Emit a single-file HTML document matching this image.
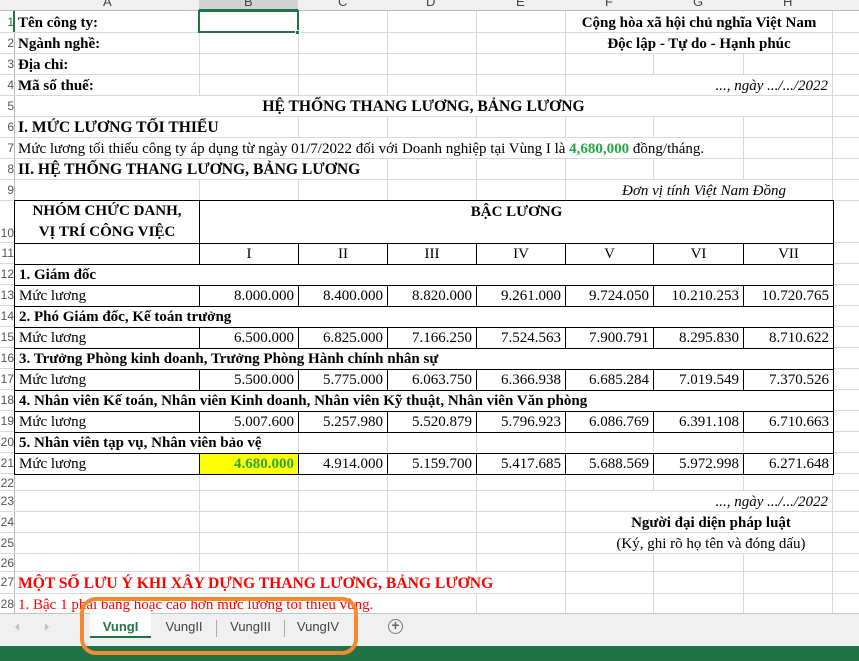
<!DOCTYPE html>
<html><head><meta charset="utf-8"><style>
*{margin:0;padding:0;box-sizing:border-box}
body{width:859px;height:661px;overflow:hidden;background:#fff;position:relative;font-family:"Liberation Serif",serif;font-size:15px;color:#000}
.a{position:absolute;white-space:nowrap}
.v{position:absolute;top:11px;height:602px;width:1px;background:#d9d9d9}
.h{position:absolute;left:0;width:859px;height:1px;background:#d9d9d9}
.t{position:absolute;white-space:nowrap;background:#fff;line-height:22px;height:20px}
.b{font-weight:bold}
.i{font-style:italic}
.rh{position:absolute;left:0;width:14px;overflow:hidden;text-align:right;font-family:"Liberation Sans",sans-serif;font-size:12px;color:#555;background:#fff;direction:rtl}
.ch{position:absolute;top:-6px;font-family:"Liberation Sans",sans-serif;font-size:13px;color:#444}
table{position:absolute;left:14px;top:200px;width:819px;border-collapse:collapse;table-layout:fixed;background:#fff}
td{border:1px solid #000;padding:0 4px;white-space:nowrap;overflow:visible;line-height:20px;height:21px}
td.r{text-align:right}
td.c{text-align:center}
.g{color:#2aa847;font-weight:bold}
</style></head><body>
<div class="a" style="left:0;top:0;width:859px;height:11px;background:#f0f0f0;border-bottom:1px solid #bbb"></div>
<div class="a" style="left:199px;top:0;width:99px;height:11px;background:#d3d3d3;border-bottom:2px solid #217346"></div>
<div class="ch" style="left:103px">A</div><div class="ch" style="left:244px">B</div><div class="ch" style="left:338px">C</div><div class="ch" style="left:426px">D</div><div class="ch" style="left:516px">E</div><div class="ch" style="left:605px">F</div><div class="ch" style="left:693px">G</div><div class="ch" style="left:783px">H</div>
<div class="v" style="left:14px;background:#bbb"></div><div class="v" style="left:199px"></div><div class="v" style="left:298px"></div><div class="v" style="left:387px"></div><div class="v" style="left:476px"></div><div class="v" style="left:565px"></div><div class="v" style="left:653px"></div><div class="v" style="left:743px"></div><div class="v" style="left:832px"></div>
<div class="h" style="top:32px"></div><div class="h" style="top:53px"></div><div class="h" style="top:74px"></div><div class="h" style="top:95px"></div><div class="h" style="top:116px"></div><div class="h" style="top:137px"></div><div class="h" style="top:158px"></div><div class="h" style="top:179px"></div><div class="h" style="top:200px"></div><div class="h" style="top:242px"></div><div class="h" style="top:263px"></div><div class="h" style="top:284px"></div><div class="h" style="top:305px"></div><div class="h" style="top:326px"></div><div class="h" style="top:347px"></div><div class="h" style="top:368px"></div><div class="h" style="top:389px"></div><div class="h" style="top:410px"></div><div class="h" style="top:431px"></div><div class="h" style="top:452px"></div><div class="h" style="top:473px"></div><div class="h" style="top:490px"></div><div class="h" style="top:511px"></div><div class="h" style="top:532px"></div><div class="h" style="top:553px"></div><div class="h" style="top:571px"></div><div class="h" style="top:593px"></div>
<div class="rh" style="top:15px;color:#217346">1</div><div class="rh" style="top:36px">2</div><div class="rh" style="top:57px">3</div><div class="rh" style="top:78px">4</div><div class="rh" style="top:99px">5</div><div class="rh" style="top:120px">6</div><div class="rh" style="top:141px">7</div><div class="rh" style="top:162px">8</div><div class="rh" style="top:183px">9</div><div class="rh" style="top:226px">10</div><div class="rh" style="top:246px">11</div><div class="rh" style="top:267px">12</div><div class="rh" style="top:288px">13</div><div class="rh" style="top:309px">14</div><div class="rh" style="top:330px">15</div><div class="rh" style="top:351px">16</div><div class="rh" style="top:372px">17</div><div class="rh" style="top:393px">18</div><div class="rh" style="top:414px">19</div><div class="rh" style="top:435px">20</div><div class="rh" style="top:456px">21</div><div class="rh" style="top:476px">22</div><div class="rh" style="top:494px">23</div><div class="rh" style="top:515px">24</div><div class="rh" style="top:536px">25</div><div class="rh" style="top:556px">26</div><div class="rh" style="top:575px">27</div><div class="rh" style="top:597px">28</div>
<div class="a" style="left:13px;top:11px;width:2px;height:21px;background:#217346"></div>
<div class="t b" style="left:18px;top:12px">Tên công ty:</div>
<div class="t b" style="left:18px;top:33px">Ngành nghề:</div>
<div class="t b" style="left:18px;top:54px">Địa chỉ:</div>
<div class="t b" style="left:18px;top:75px">Mã số thuế:</div>
<div class="t b" style="left:566px;top:12px;width:266px;text-align:center">Cộng hòa xã hội chủ nghĩa Việt Nam</div>
<div class="t b" style="left:566px;top:33px;width:266px;text-align:center">Độc lập - Tự do - Hạnh phúc</div>
<div class="t i" style="left:566px;top:75px;width:262px;text-align:right">..., ngày .../.../2022</div>
<div class="t b" style="left:15px;top:96px;width:817px;text-align:center;font-size:15.6px">HỆ THỐNG THANG LƯƠNG, BẢNG LƯƠNG</div>
<div class="t b" style="left:15px;top:117px;padding-left:3px;font-size:15.6px;width:220px">I. MỨC LƯƠNG TỐI THIỂU</div>
<div class="t" style="left:15px;top:138px;padding-left:3px;width:700px">Mức lương tối thiểu công ty áp dụng từ ngày 01/7/2022 đối với Doanh nghiệp tại Vùng I là <span class="g">4,680,000</span> đồng/tháng.</div>
<div class="t b" style="left:15px;top:159px;padding-left:3px;font-size:15.6px;width:370px">II. HỆ THỐNG THANG LƯƠNG, BẢNG LƯƠNG</div>
<div class="t i" style="left:600px;top:180px;width:190px;text-align:right;padding-right:4px">Đơn vị tính Việt Nam Đồng</div>
<div class="t i" style="left:566px;top:491px;width:262px;text-align:right">..., ngày .../.../2022</div>
<div class="t b" style="left:590px;top:512px;width:242px;text-align:center">Người đại diện pháp luật</div>
<div class="t" style="left:590px;top:533px;width:242px;text-align:center">(Ký, ghi rõ họ tên và đóng dấu)</div>
<div class="t b" style="left:15px;top:573px;padding-left:3px;font-size:15.6px;color:#f00;width:500px">MỘT SỐ LƯU Ý KHI XÂY DỰNG THANG LƯƠNG, BẢNG LƯƠNG</div>
<div class="t" style="left:15px;top:594px;padding-left:3px;color:#f00;width:400px">1. Bậc 1 phải bằng hoặc cao hơn mức lương tối thiểu vùng.</div>
<div class="a" style="left:198px;top:10px;width:101px;height:23px;border:2px solid #217346"></div>
<div class="a" style="left:295px;top:30px;width:5px;height:5px;background:#217346;border:1px solid #fff"></div>
<table>
<colgroup><col style="width:185px"><col style="width:99px"><col style="width:89px"><col style="width:89px"><col style="width:89px"><col style="width:88px"><col style="width:90px"><col style="width:90px"></colgroup>
<tr><td class="c b" style="line-height:21px;height:42px;vertical-align:middle">NHÓM CHỨC DANH,<br>VỊ TRÍ CÔNG VIỆC</td><td colspan="7" class="c b" style="vertical-align:top;height:42px;padding-top:1px">BẬC LƯƠNG</td></tr>
<tr><td></td><td class="c">I</td><td class="c">II</td><td class="c">III</td><td class="c">IV</td><td class="c">V</td><td class="c">VI</td><td class="c">VII</td></tr>
<tr><td colspan="8" class="b">1. Giám đốc</td></tr>
<tr><td>Mức lương</td><td class="r">8.000.000</td><td class="r">8.400.000</td><td class="r">8.820.000</td><td class="r">9.261.000</td><td class="r">9.724.050</td><td class="r">10.210.253</td><td class="r">10.720.765</td></tr>
<tr><td colspan="8" class="b">2. Phó Giám đốc, Kế toán trưởng</td></tr>
<tr><td>Mức lương</td><td class="r">6.500.000</td><td class="r">6.825.000</td><td class="r">7.166.250</td><td class="r">7.524.563</td><td class="r">7.900.791</td><td class="r">8.295.830</td><td class="r">8.710.622</td></tr>
<tr><td colspan="8" class="b">3. Trưởng Phòng kinh doanh, Trưởng Phòng Hành chính nhân sự</td></tr>
<tr><td>Mức lương</td><td class="r">5.500.000</td><td class="r">5.775.000</td><td class="r">6.063.750</td><td class="r">6.366.938</td><td class="r">6.685.284</td><td class="r">7.019.549</td><td class="r">7.370.526</td></tr>
<tr><td colspan="8" class="b">4. Nhân viên Kế toán, Nhân viên Kinh doanh, Nhân viên Kỹ thuật, Nhân viên Văn phòng</td></tr>
<tr><td>Mức lương</td><td class="r">5.007.600</td><td class="r">5.257.980</td><td class="r">5.520.879</td><td class="r">5.796.923</td><td class="r">6.086.769</td><td class="r">6.391.108</td><td class="r">6.710.663</td></tr>
<tr><td colspan="2" class="b" style="border-right-color:#d9d9d9">5. Nhân viên tạp vụ, Nhân viên bảo vệ</td><td style="border-left-color:#d9d9d9;border-right-color:#d9d9d9"></td><td style="border-left-color:#d9d9d9;border-right-color:#d9d9d9"></td><td style="border-left-color:#d9d9d9;border-right-color:#d9d9d9"></td><td style="border-left-color:#d9d9d9;border-right-color:#d9d9d9"></td><td style="border-left-color:#d9d9d9;border-right-color:#d9d9d9"></td><td style="border-left-color:#d9d9d9"></td></tr>
<tr><td>Mức lương</td><td class="r g" style="background:#ffff00">4.680.000</td><td class="r">4.914.000</td><td class="r">5.159.700</td><td class="r">5.417.685</td><td class="r">5.688.569</td><td class="r">5.972.998</td><td class="r">6.271.648</td></tr>
</table>
<div class="a" style="left:0;top:613px;width:859px;height:33px;background:#f0f0f0;border-top:1px solid #c6c6c6"></div>
<div class="a" style="left:15px;top:623px;width:0;height:0;border-top:4px solid transparent;border-bottom:4px solid transparent;border-right:4px solid #c0c0c0"></div>
<div class="a" style="left:45px;top:623px;width:0;height:0;border-top:4px solid transparent;border-bottom:4px solid transparent;border-left:4px solid #c0c0c0"></div>
<div class="a" style="left:90px;top:613px;width:61px;height:25px;background:#fff;border-bottom:2px solid #217346"></div>
<div class="a" style="left:90px;top:619px;width:61px;text-align:center;font-family:'Liberation Sans',sans-serif;font-size:13px;font-weight:bold;color:#217346">VungI</div>
<div class="a" style="left:152px;top:619px;width:64px;text-align:center;font-family:'Liberation Sans',sans-serif;font-size:13px;color:#444">VungII</div>
<div class="a" style="left:216px;top:620px;width:1px;height:17px;background:#aaa"></div>
<div class="a" style="left:217px;top:619px;width:67px;text-align:center;font-family:'Liberation Sans',sans-serif;font-size:13px;color:#444">VungIII</div>
<div class="a" style="left:284px;top:620px;width:1px;height:17px;background:#aaa"></div>
<div class="a" style="left:285px;top:619px;width:66px;text-align:center;font-family:'Liberation Sans',sans-serif;font-size:13px;color:#444">VungIV</div>
<div class="a" style="left:388px;top:619px;width:15px;height:15px;border:1.5px solid #777;border-radius:50%;text-align:center;line-height:11px;font-family:'Liberation Sans',sans-serif;font-size:14px;font-weight:bold;color:#666">+</div>
<div class="a" style="left:0;top:646px;width:859px;height:15px;background:#217346"></div>
<div class="a" style="left:80px;top:597px;width:278px;height:58px;border:4px solid #f58a32;border-radius:16px"></div>
</body></html>
